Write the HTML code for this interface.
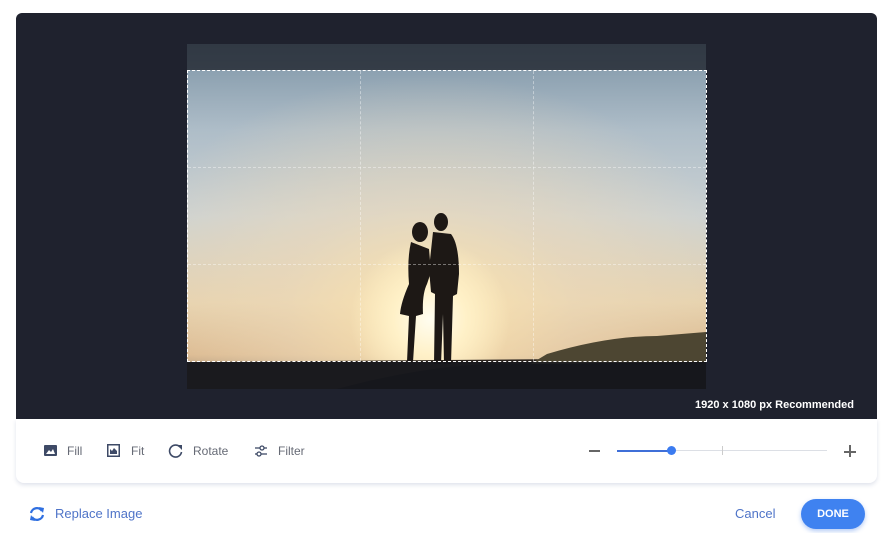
<!DOCTYPE html>
<html><head><style>
body{margin:0;width:892px;height:533px;background:#fff;font-family:"Liberation Sans",sans-serif;position:relative;overflow:hidden}
.panel{position:absolute;left:16px;top:13px;width:861px;height:406px;background:#1f222e;border-radius:6px 6px 0 0}
.tool{position:absolute;left:16px;top:419px;width:861px;height:64px;background:#fff;border-radius:0 0 8px 8px;box-shadow:0 2px 4px rgba(40,60,120,.15)}
.img{position:absolute;left:187px;top:44px;width:519px;height:345px;overflow:hidden;
background:
radial-gradient(ellipse 80px 80px at 243px 275px,#fffdf0 0%,#fff1c8 45%,rgba(252,225,170,0) 100%),
radial-gradient(ellipse 320px 240px at 243px 270px,rgba(252,228,175,.95) 0%,rgba(238,218,185,.6) 45%,rgba(190,200,210,0) 100%),
linear-gradient(180deg,#7d94a6 0%,#aebdc8 25%,#ccd2d3 50%,#e6d2ae 75%,#d8b48a 90%,#6b6157 100%)}
.dim{position:absolute;left:0;width:519px;background:rgba(20,22,30,.72)}
.crop{position:absolute;left:187px;top:70px;width:520px;height:292px;border:1px dashed #fff;box-sizing:border-box}
.gl{position:absolute;border-color:rgba(255,255,255,.4);border-style:dashed;border-width:0}
.lbl{position:absolute;font-size:12px;color:#666a75}
</style></head><body>
<div class="panel"></div>
<div class="img">
<svg width="519" height="345" style="position:absolute;left:0;top:0">
<path d="M0 318 L519 314 L519 345 L0 345Z" fill="#2b241f"/>
<path d="M360 310 Q420 292 470 292 L519 288 L519 320 L340 322Z" fill="#4d4632"/>
<path d="M150 345 Q250 318 330 320 L519 318 L519 345Z" fill="#1f1a16"/>
<g fill="#1d1815">
<ellipse cx="233" cy="188" rx="8" ry="10"/>
<path d="M224 198 Q220 215 222 240 Q214 258 213 270 L222 272 L220 318 L226 318 L229 272 L236 270 Q235 250 240 240 L244 228 L242 205 Z"/>
<ellipse cx="254" cy="178" rx="7" ry="9"/>
<path d="M246 188 L264 190 Q272 200 272 230 L270 250 L266 252 L264 320 L257 320 L256 270 L254 320 L247 320 L248 250 L244 248 L242 225 Z"/>
</g>
</svg>
<div class="dim" style="top:0;height:26px"></div>
<div class="dim" style="top:318px;height:27px"></div>
</div>
<div class="crop"></div>
<div class="gl" style="left:360px;top:71px;height:290px;border-left-width:1px"></div>
<div class="gl" style="left:533px;top:71px;height:290px;border-left-width:1px"></div>
<div class="gl" style="left:188px;top:167px;width:518px;border-top-width:1px"></div>
<div class="gl" style="left:188px;top:264px;width:518px;border-top-width:1px"></div>
<div style="position:absolute;right:38px;top:399px;color:#fff;font-size:11px;font-weight:bold">1920 x 1080 px Recommended</div>
<div class="tool"></div>
<svg style="position:absolute;left:44px;top:445px" width="14" height="12"><rect width="13" height="11" rx="1" fill="#3e4a66"/><path d="M2 9 L5 5 L7 7 L9 4 L11 9Z" fill="#fff"/></svg>
<div class="lbl" style="left:67px;top:444px">Fill</div>
<svg style="position:absolute;left:107px;top:444px" width="14" height="13"><rect x=".75" y=".75" width="11.5" height="11.5" fill="none" stroke="#3e4a66" stroke-width="1.5"/><path d="M3 10 L3 5 L5 7 L7 4 L10 7 L10 10Z" fill="#3e4a66"/></svg>
<div class="lbl" style="left:131px;top:444px">Fit</div>
<svg style="position:absolute;left:168px;top:443px" width="16" height="16"><path d="M12 4 A6 6 0 1 0 13.5 9" fill="none" stroke="#3e4a66" stroke-width="1.6"/><path d="M9 2 L14 2 L14 7Z" fill="#3e4a66"/></svg>
<div class="lbl" style="left:193px;top:444px">Rotate</div>
<svg style="position:absolute;left:254px;top:444px" width="14" height="14"><g stroke="#3e4a66" stroke-width="1.3" fill="#fff"><line x1="1" y1="4" x2="13" y2="4"/><line x1="1" y1="10" x2="13" y2="10"/><circle cx="8" cy="4" r="2"/><circle cx="5" cy="10" r="2"/></g></svg>
<div class="lbl" style="left:278px;top:444px">Filter</div>
<div style="position:absolute;left:589px;top:450px;width:11px;height:1.5px;background:#666"></div>
<div style="position:absolute;left:617px;top:450px;width:210px;height:1px;background:#dcdfe5"></div>
<div style="position:absolute;left:617px;top:450px;width:55px;height:2px;background:#3f6fd8"></div>
<div style="position:absolute;left:722px;top:446px;width:1px;height:9px;background:#ccc"></div>
<div style="position:absolute;left:667px;top:446px;width:9px;height:9px;border-radius:50%;background:#3b7bf0"></div>
<div style="position:absolute;left:844px;top:451px;width:12px;height:1.5px;background:#666"></div>
<div style="position:absolute;left:849px;top:445px;width:1.5px;height:12px;background:#666"></div>
<svg style="position:absolute;left:28px;top:505px" width="18" height="18"><g fill="none" stroke="#2f6fe0" stroke-width="2.2"><path d="M3 8 A6 6 0 0 1 14 6"/><path d="M15 10 A6 6 0 0 1 4 12"/></g><path d="M11 2 L16 3 L15 8Z M7 16 L2 15 L3 10Z" fill="#2f6fe0"/></svg>
<div style="position:absolute;left:55px;top:506px;font-size:13px;color:#4f74c8">Replace Image</div>
<div style="position:absolute;left:735px;top:506px;font-size:13px;color:#4f74c8">Cancel</div>
<div style="position:absolute;left:801px;top:499px;width:64px;height:30px;border-radius:15px;background:#3f82f0;color:#fff;font-size:11px;font-weight:bold;text-align:center;line-height:30px;box-shadow:0 2px 5px rgba(60,120,230,.4)">DONE</div>
</body></html>
